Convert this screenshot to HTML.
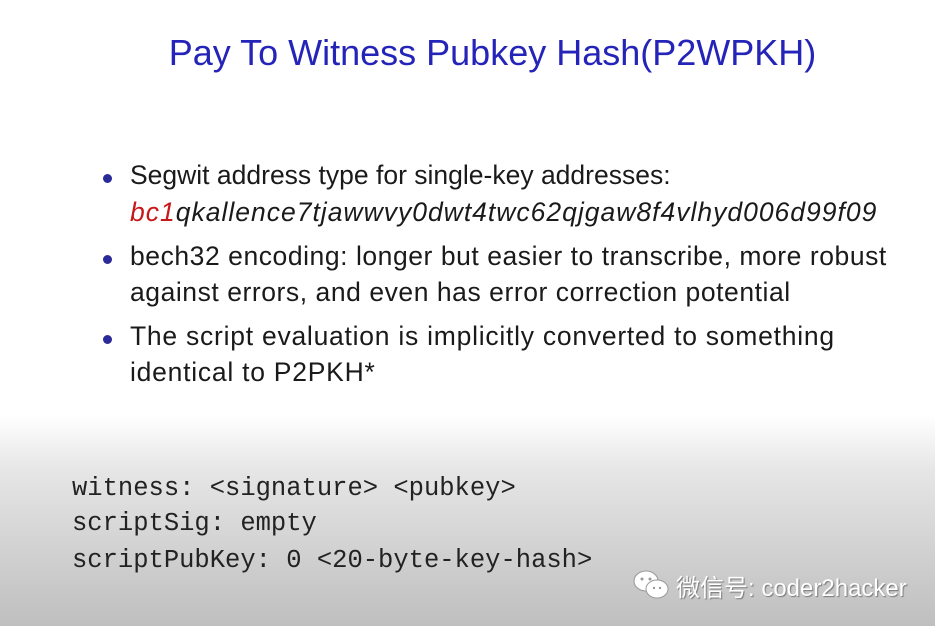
<!DOCTYPE html>
<html><head><meta charset="utf-8"><style>
html,body{margin:0;padding:0}
body{width:935px;height:626px;position:relative;overflow:hidden;font-family:"Liberation Sans",sans-serif;
background:linear-gradient(to bottom,#fff 0px,#fff 415px,#e6e6e6 470px,#cfcfcf 560px,#bfbfbf 626px);}
.t{position:absolute;white-space:nowrap}
.title{left:0;width:985px;text-align:center;top:32px;font-size:36px;color:#2424b8}
.b{font-size:26.5px;color:#1a1a1a;left:130px;letter-spacing:0.55px}
.dot{position:absolute;width:9px;height:9px;border-radius:50%;background:#2a2a9a;left:103px}
.m{font-family:"Liberation Mono",monospace;font-size:25.5px;color:#222;left:72px}
.w{font-family:"Liberation Sans","Noto Sans CJK SC",sans-serif;font-size:24px;color:#fff;left:676px;top:568px;text-shadow:1px 1px 1px #777}
</style></head><body>
<div class="t title">Pay To Witness Pubkey Hash(P2WPKH)</div>
<div class="dot" style="top:174px"></div>
<div class="t b" style="top:160px;letter-spacing:0">Segwit address type for single-key addresses:</div>
<div class="t b" style="top:197px;font-style:italic;letter-spacing:1px"><span style="color:#c81818">bc1</span>qkallence7tjawwvy0dwt4twc62qjgaw8f4vlhyd006d99f09</div>
<div class="dot" style="top:255px"></div>
<div class="t b" style="top:241px">bech32 encoding: longer but easier to transcribe, more robust</div>
<div class="t b" style="top:277px">against errors, and even has error correction potential</div>
<div class="dot" style="top:335px"></div>
<div class="t b" style="top:321px;letter-spacing:0.75px">The script evaluation is implicitly converted to something</div>
<div class="t b" style="top:357px;letter-spacing:0.75px">identical to P2PKH*</div>
<div class="t m" style="top:474px">witness: &lt;signature&gt; &lt;pubkey&gt;</div>
<div class="t m" style="top:509px">scriptSig: empty</div>
<div class="t m" style="top:546px">scriptPubKey: 0 &lt;20-byte-key-hash&gt;</div>
<svg style="position:absolute;left:632px;top:569px" width="40" height="32" viewBox="0 0 40 32">
<ellipse cx="14" cy="12" rx="12" ry="10" fill="#fff" stroke="#999" stroke-width="1"/>
<ellipse cx="25" cy="20" rx="11" ry="9" fill="#fff" stroke="#999" stroke-width="1"/>
<circle cx="10" cy="10" r="1.5" fill="#999"/><circle cx="18" cy="10" r="1.5" fill="#999"/>
<circle cx="22" cy="19" r="1.2" fill="#999"/><circle cx="28" cy="19" r="1.2" fill="#999"/>
</svg>
<div class="t w">微信号: coder2hacker</div>
</body></html>
